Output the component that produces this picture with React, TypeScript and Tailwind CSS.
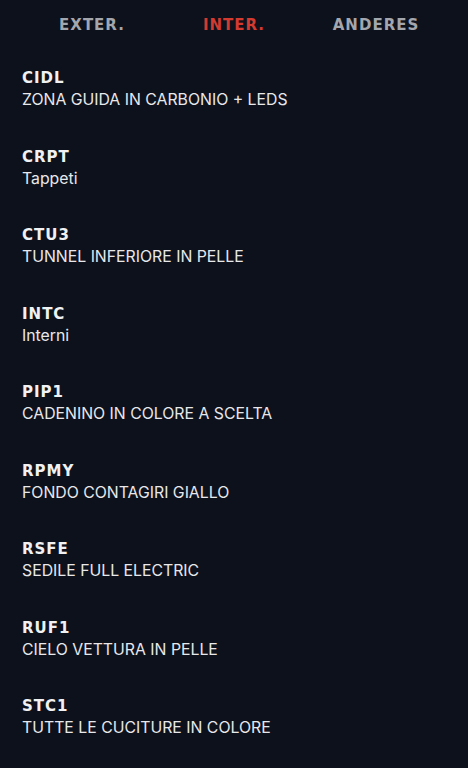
import React from "react";

const items = [
  { code: "CIDL", label: "ZONA GUIDA IN CARBONIO + LEDS" },
  { code: "CRPT", label: "Tappeti" },
  { code: "CTU3", label: "TUNNEL INFERIORE IN PELLE" },
  { code: "INTC", label: "Interni" },
  { code: "PIP1", label: "CADENINO IN COLORE A SCELTA" },
  { code: "RPMY", label: "FONDO CONTAGIRI GIALLO" },
  { code: "RSFE", label: "SEDILE FULL ELECTRIC" },
  { code: "RUF1", label: "CIELO VETTURA IN PELLE" },
  { code: "STC1", label: "TUTTE LE CUCITURE IN COLORE" },
];

const tabs = ["EXTER.", "INTER.", "ANDERES"];

export default function App() {
  return (
    <div className="w-[468px] h-[768px] overflow-hidden bg-[#0d111b] font-['Inter',sans-serif]">
      <div className="h-[50px] px-[21px] grid grid-cols-3 items-center">
        {tabs.map((t, i) => (
          <div
            key={t}
            className={
              "text-center text-[15px] font-bold tracking-[1px] font-['DejaVu_Sans',sans-serif] " +
              (i === 1 ? "text-[#d33a30]" : "text-[#a4a6ad]")
            }
          >
            {t}
          </div>
        ))}
      </div>

      <div className="flex flex-col">
        {items.map((it) => (
          <div key={it.code} className="h-[78.5px] pt-[17px] px-[22px]">
            <div className="text-[15px] leading-[22px] font-bold tracking-[1px] text-[#f1f1f3] font-['DejaVu_Sans',sans-serif]">
              {it.code}
            </div>
            <div className="text-[15.8px] leading-[22px] text-[#e8e8eb]">
              {it.label}
            </div>
          </div>
        ))}
      </div>
    </div>
  );
}
